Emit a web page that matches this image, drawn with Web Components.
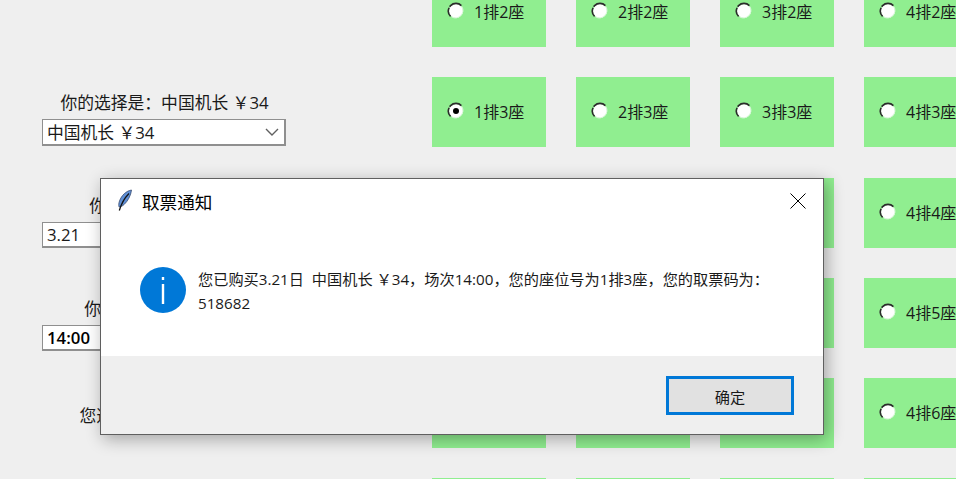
<!DOCTYPE html>
<html lang="zh">
<head>
<meta charset="utf-8">
<title>取票通知</title>
<style>
  html, body { margin: 0; height: 479px; overflow: hidden; background: #efefef; }
  body { font-family: "Open Sans", "Noto Sans CJK SC", sans-serif; color: #1a1a1a; }
</style>
</head>
<body>
<ticket-page>
  <side-panel slot="side">
    <field-group label="你的选择是：中国机长 ￥34" style="--top:91px">
      <combo-box value="中国机长 ￥34"></combo-box>
    </field-group>
    <field-group label="你选择的日期：3.21" style="--top:194px">
      <text-entry value="3.21"></text-entry>
    </field-group>
    <field-group label="你选择的场次：14:00" style="--top:297px">
      <text-entry value="14:00" strong></text-entry>
    </field-group>
    <field-group label="您选的座位是：1排3座" style="--top:404px"></field-group>
  </side-panel>
  <seat-grid slot="seats" rows="2,3,4,5,6,7" selected="1,3"></seat-grid>
</ticket-page>
<message-box title="取票通知" button="确定">您已购买3.21日&nbsp; 中国机长 ￥34，场次14:00，您的座位号为1排3座，您的取票码为：518682</message-box>

<script>
class TicketPage extends HTMLElement {
  constructor() {
    super();
    this.attachShadow({ mode: "open" }).innerHTML = `
      <style>
        :host { display: flex; width: 1000px; height: 479px; overflow: hidden; }
        .side { display: block; flex: 0 0 432px; }
        .seats { display: block; flex: none; }
      </style>
      <div class="side"><slot name="side"></slot></div>
      <div class="seats"><slot name="seats"></slot></div>
    `;
  }
}

class SidePanel extends HTMLElement {
  constructor() {
    super();
    this.attachShadow({ mode: "open" }).innerHTML = `
      <style>
        :host { display: flex; flex-direction: column; width: 244px; margin-left: 42px; }
      </style>
      <slot></slot>
    `;
  }
}

class FieldGroup extends HTMLElement {
  constructor() {
    super();
    this.attachShadow({ mode: "open" });
  }
  connectedCallback() {
    this.shadowRoot.innerHTML = `
      <style>
        :host { display: block; height: 0; }
        .inner { display: flex; flex-direction: column; gap: 4px; padding-top: var(--top); height: 0; }
        .label { text-align: center; font-size: 16.8px; line-height: 24px; white-space: nowrap; margin-left: 1px; }
      </style>
      <div class="inner">
        <div class="label">${this.getAttribute("label")}</div>
        <slot></slot>
      </div>
    `;
  }
}

class ComboBox extends HTMLElement {
  constructor() {
    super();
    this.attachShadow({ mode: "open" });
  }
  connectedCallback() {
    this.shadowRoot.innerHTML = `
      <style>
        :host { display: flex; align-items: center; justify-content: space-between; box-sizing: border-box;
          height: 33px; border: 2px solid #8f8f8f; border-width: 1px 2px 2px 1px; background: #fff;
          padding: 0 5px 0 4px; font-size: 16.8px; }
        svg { display: block; }
      </style>
      <span>${this.getAttribute("value")}</span>
      <svg width="14" height="8" viewBox="0 0 14 8"><path d="M1 1l6 6 6-6" fill="none" stroke="#606060" stroke-width="1.4"/></svg>
    `;
  }
}

class TextEntry extends HTMLElement {
  constructor() {
    super();
    this.attachShadow({ mode: "open" });
  }
  connectedCallback() {
    this.shadowRoot.innerHTML = `
      <style>
        :host { display: flex; align-items: center; box-sizing: border-box; height: 34px;
          border: 2px solid #8f8f8f; border-width: 1px 2px 2px 1px; background: #fff; padding-left: 4px; font-size: 16.8px; }
        :host([strong]) { color: #000; font-weight: 600; }
      </style>
      <span>${this.getAttribute("value")}</span>
    `;
  }
}

class SeatRadio extends HTMLElement {
  constructor() {
    super();
    this.attachShadow({ mode: "open" });
  }
  connectedCallback() {
    const dot = this.hasAttribute("checked") ? `<circle cx="9" cy="9" r="3" fill="#000"/>` : "";
    this.shadowRoot.innerHTML = `
      <style>
        :host { display: block; width: 18px; height: 18px; }
        svg { display: block; }
      </style>
      <svg width="18" height="18" viewBox="0 0 18 18">
        <circle cx="9" cy="9" r="7" fill="#fff"/>
        <path d="M3.6 14.4A7.6 7.6 0 1 1 14.4 3.6" fill="none" stroke="#2b2b2b" stroke-width="1.6" stroke-dasharray="9 1.2 14"/>
        <path d="M14.9 4.6A7.6 7.6 0 0 1 4.6 14.9" fill="none" stroke="#d8f7d8" stroke-width="1"/>
        ${dot}
      </svg>
    `;
  }
}

class SeatCard extends HTMLElement {
  constructor() {
    super();
    this.attachShadow({ mode: "open" });
  }
  connectedCallback() {
    const col = this.getAttribute("col");
    const row = this.getAttribute("row");
    const checked = this.hasAttribute("checked") ? "checked" : "";
    this.shadowRoot.innerHTML = `
      <style>
        :host { display: flex; align-items: center; gap: 9px; box-sizing: border-box; height: 70px;
          padding: 0 0 2px 15px; background: #90ee90; font-size: 16px; white-space: nowrap; }
      </style>
      <seat-radio ${checked}></seat-radio>
      <span>${col}排${row}座</span>
    `;
  }
}

class SeatGrid extends HTMLElement {
  constructor() {
    super();
    this.attachShadow({ mode: "open" });
  }
  connectedCallback() {
    const rows = this.getAttribute("rows").split(",");
    const selected = this.getAttribute("selected");
    let cards = "";
    for (const row of rows) {
      for (let col = 1; col <= 4; col++) {
        const checked = `${col},${row}` === selected ? "checked" : "";
        cards += `<seat-card col="${col}" row="${row}" ${checked}></seat-card>`;
      }
    }
    this.shadowRoot.innerHTML = `
      <style>
        :host { display: grid; grid-template-columns: repeat(4, 114px); column-gap: 30px; row-gap: 30.3px; margin-top: -23px; }
      </style>
      ${cards}
    `;
  }
}

class MessageBox extends HTMLElement {
  constructor() {
    super();
    this.attachShadow({ mode: "open" });
  }
  connectedCallback() {
    this.shadowRoot.innerHTML = `
      <style>
        :host { position: absolute; left: 100px; top: 178px; width: 724px; height: 257px; box-sizing: border-box;
          display: flex; flex-direction: column; background: #fff; border: 1px solid #5f5f5f;
          box-shadow: 3px 4px 16px rgba(0,0,0,.32); color: #1a1a1a; }
        .title { display: flex; align-items: center; height: 44px; padding-left: 15px; flex: none; color: #000; font-size: 17.6px; }
        .title svg { margin-right: 8px; }
        .close { margin-left: auto; margin-right: 17px; width: 16px; height: 16px; }
        .close svg { display: block; margin: 0; }
        .body { flex: 1; display: flex; align-items: flex-start; padding: 44px 50px 0 39px; gap: 12px; }
        .text { width: 580px; font-size: 15.2px; line-height: 24px; }
        .text-wrap { padding-top: 0; }
        .foot { flex: none; height: 78px; background: #efefef; display: flex; justify-content: flex-end; align-items: flex-start; padding: 20px 29px 0 0; box-sizing: border-box; }
        button { width: 128px; height: 39px; box-sizing: border-box; border: 3px solid #0078d7; background: #e1e1e1; color: #1a1a1a;
          font: inherit; font-size: 15.2px; padding: 0; }
      </style>
      <div class="title">
        <svg width="18" height="24" viewBox="0 0 18 24">
          <path d="M15.5 1C10 2 5.5 6.5 3.5 12c-.8 2.2-1 4.500-.4 6 1.500-.2 3.500-1 5-2.500C11.500 12.500 15 6.500 15.500 1z" fill="#5f8fd6" stroke="#3a4c70" stroke-width=".8"/>
          <path d="M13 4.500C9 8.500 5.500 14 3.300 21.500" fill="none" stroke="#151515" stroke-width="1.300"/>
        </svg>
        <span>${this.getAttribute("title")}</span>
        <div class="close">
          <svg width="16" height="16" viewBox="0 0 16 16"><path d="M.5.500l15 15M15.500.500l-15 15" stroke="#000" stroke-width="1" fill="none"/></svg>
        </div>
      </div>
      <div class="body">
        <svg width="46" height="46" viewBox="0 0 46 46" style="flex:none">
          <circle cx="23" cy="23" r="23" fill="#0078d7"/>
          <rect x="21.800" y="10" width="2.400" height="3" fill="#fff"/>
          <rect x="21.800" y="17" width="2.400" height="20" fill="#fff"/>
        </svg>
        <div class="text"><slot></slot></div>
      </div>
      <div class="foot"><button>${this.getAttribute("button")}</button></div>
    `;
  }
}

customElements.define("ticket-page", TicketPage);
customElements.define("side-panel", SidePanel);
customElements.define("field-group", FieldGroup);
customElements.define("combo-box", ComboBox);
customElements.define("text-entry", TextEntry);
customElements.define("seat-radio", SeatRadio);
customElements.define("seat-card", SeatCard);
customElements.define("seat-grid", SeatGrid);
customElements.define("message-box", MessageBox);
</script>
</body>
</html>
